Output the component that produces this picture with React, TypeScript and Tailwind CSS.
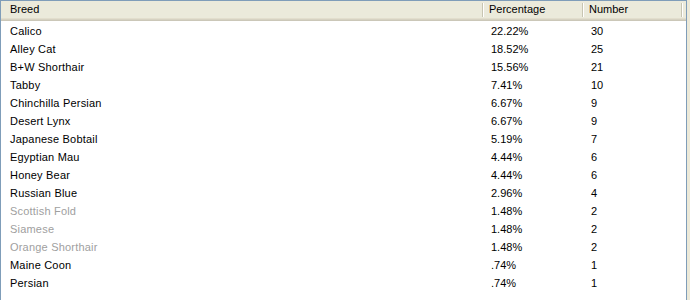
import React from "react";

const rows: [string, string, string, boolean][] = [
  ["Calico", "22.22%", "30", false],
  ["Alley Cat", "18.52%", "25", false],
  ["B+W Shorthair", "15.56%", "21", false],
  ["Tabby", "7.41%", "10", false],
  ["Chinchilla Persian", "6.67%", "9", false],
  ["Desert Lynx", "6.67%", "9", false],
  ["Japanese Bobtail", "5.19%", "7", false],
  ["Egyptian Mau", "4.44%", "6", false],
  ["Honey Bear", "4.44%", "6", false],
  ["Russian Blue", "2.96%", "4", false],
  ["Scottish Fold", "1.48%", "2", true],
  ["Siamese", "1.48%", "2", true],
  ["Orange Shorthair", "1.48%", "2", true],
  ["Maine Coon", ".74%", "1", false],
  ["Persian", ".74%", "1", false],
];

function Sep() {
  return (
    <div className="flex h-[14px] self-center">
      <div className="w-px bg-[#c7c5b2]" />
      <div className="w-px bg-white" />
    </div>
  );
}

export default function App() {
  return (
    <div
      className="w-[690px] h-[300px] bg-[#ece9d8] flex overflow-hidden text-[11px] text-black"
      style={{ fontFamily: '"Liberation Sans", Arial, sans-serif' }}
    >
      <div className="w-[687px] h-full border-l border-t border-r border-[#7f9db9] bg-white flex flex-col">
        <div className="h-[20px] flex flex-col bg-[#ebeadb]">
          <div className="flex-1 flex items-stretch">
            <div className="w-[481px] pl-[9px] flex items-center">Breed</div>
            <Sep />
            <div className="w-[98px] pl-[5px] flex items-center">Percentage</div>
            <Sep />
            <div className="w-[97px] pl-[5px] flex items-center">Number</div>
            <Sep />
          </div>
          <div className="h-px bg-[#e2decd]" />
          <div className="h-px bg-[#d6d2c2]" />
          <div className="h-px bg-[#cbc7b8]" />
        </div>
        <div className="flex flex-col pt-[1px]">
          {rows.map(([b, p, n, g]) => (
            <div key={b} className="h-[18px] flex items-center text-black">
              <div className={`w-[483px] pl-[9px] tracking-[0.2px] ${g ? "text-[#a0a0a0]" : "text-black"}`}>{b}</div>
              <div className="w-[100px] pl-[7px]">{p}</div>
              <div className="pl-[7px]">{n}</div>
            </div>
          ))}
        </div>
      </div>
    </div>
  );
}
